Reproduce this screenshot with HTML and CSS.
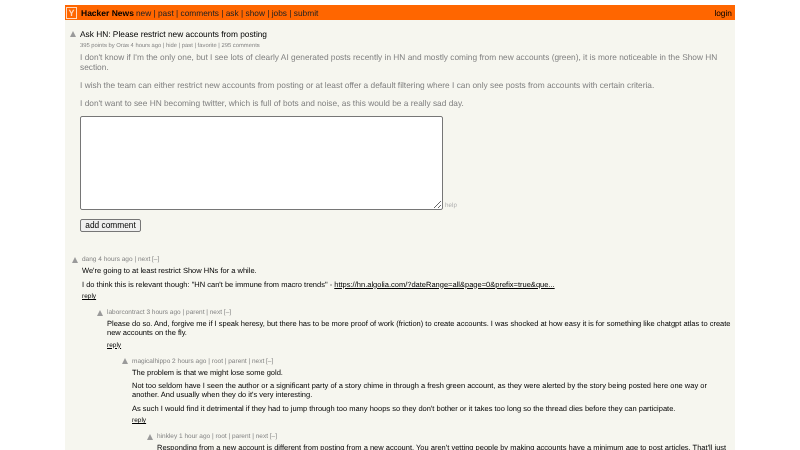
FILE: index.html
```html
<!DOCTYPE html>
<html lang="en">
<head>
  <meta charset="UTF-8" />
  <title>Ask HN: Please restrict new accounts from posting | Hacker News</title>
  <link rel="stylesheet" href="styles.css">
</head>
<body>
  <div class="page">
    <header class="topbar">
      <span class="logo">Y</span>
      <b class="brand">Hacker News</b>
      <nav class="nav">new | past | comments | ask | show | jobs | submit</nav>
      <span class="login">login</span>
    </header>

    <section class="story">
      <div class="title-row">
        <span class="arrow"></span>
        <span class="title">Ask HN: Please restrict new accounts from posting</span>
      </div>
      <div class="subtext">395 points by Oras 4 hours ago | hide | past | favorite | 295 comments</div>
      <div class="toptext">
        <p>I don't know if I'm the only one, but I see lots of clearly AI generated posts recently in HN and mostly coming from new accounts (green), it is more noticeable in the Show HN section.</p>
        <p>I wish the team can either restrict new accounts from posting or at least offer a default filtering where I can only see posts from accounts with certain criteria.</p>
        <p>I don't want to see HN becoming twitter, which is full of bots and noise, as this would be a really sad day.</p>
      </div>
      <div class="reply-form">
        <div class="box-row">
          <textarea class="box"></textarea>
          <span class="help">help</span>
        </div>
        <button class="add">add comment</button>
      </div>
    </section>

    <section class="comments">
      <div class="comment">
        <div class="head"><span class="arrow"></span>dang 4 hours ago | next [–]</div>
        <div class="text">
          <p>We're going to at least restrict Show HNs for a while.</p>
          <p>I do think this is relevant though: "HN can't be immune from macro trends" - <u>https://hn.algolia.com/?dateRange=all&amp;page=0&amp;prefix=true&amp;que...</u></p>
          <p class="reply"><u>reply</u></p>
        </div>
      </div>
      <div class="comment lvl1">
        <div class="head"><span class="arrow"></span>laborcontract 3 hours ago | parent | next [–]</div>
        <div class="text">
          <p>Please do so. And, forgive me if I speak heresy, but there has to be more proof of work (friction) to create accounts. I was shocked at how easy it is for something like chatgpt atlas to create new accounts on the fly.</p>
          <p class="reply"><u>reply</u></p>
        </div>
      </div>
      <div class="comment lvl2">
        <div class="head"><span class="arrow"></span>magicalhippo 2 hours ago | root | parent | next [–]</div>
        <div class="text">
          <p>The problem is that we might lose some gold.</p>
          <p>Not too seldom have I seen the author or a significant party of a story chime in through a fresh green account, as they were alerted by the story being posted here one way or another. And usually when they do it's very interesting.</p>
          <p>As such I would find it detrimental if they had to jump through too many hoops so they don't bother or it takes too long so the thread dies before they can participate.</p>
          <p class="reply"><u>reply</u></p>
        </div>
      </div>
      <div class="comment lvl3">
        <div class="head"><span class="arrow"></span>hinkley 1 hour ago | root | parent | next [–]</div>
        <div class="text">
          <p>Responding from a new account is different from posting from a new account. You aren't vetting people by making accounts have a minimum age to post articles. That'll just encourage people to bank accounts and wait.</p>
        </div>
      </div>
    </section>
  </div>
</body>
</html>
```

FILE: styles.css
```css
html, body {
  height: 100%;
  overflow: hidden;
}

body {
  margin: 0;
  background: white;
  font-family: "Liberation Sans", Arial, sans-serif;
  font-size: 12px;
  text-rendering: geometricPrecision;
}

.page {
  width: 670px;
  height: 445px;
  margin: 5px auto 0;
  background: #f6f6ef;
  overflow: hidden;
  color: #000;
  filter: blur(0.4px);
}

.topbar {
  display: flex;
  align-items: center;
  height: 15px;
  background: #ff6600;
  font-size: 8.33px;
  padding: 0 3px 0 1px;
  color: #222;
}

.logo {
  box-sizing: border-box;
  width: 11px;
  height: 12px;
  border: 1px solid #ffd9bf;
  color: #ffd9bf;
  font-size: 9px;
  font-weight: bold;
  line-height: 11px;
  text-align: center;
  margin-right: 4px;
}

.brand {
  color: #000;
  font-size: 8.5px;
  margin-right: 2px;
}

.nav {
  flex: 1;
}

.login {
  color: #000;
}

.arrow {
  width: 0;
  height: 0;
  border-left: 3px solid transparent;
  border-right: 3px solid transparent;
  border-bottom: 6px solid #9a9a9a;
}

.story {
  padding: 7px 0 0 5px;
}

.title-row {
  display: flex;
  align-items: center;
  gap: 4px;
  height: 13px;
  font-size: 8.33px;
}

.subtext {
  margin: 3px 0 0 10px;
  font-size: 5.83px;
  color: #828282;
}

.toptext {
  margin: 4px 0 0 10px;
  color: #828282;
  font-size: 8.33px;
  line-height: 9.5px;
}

.toptext p {
  margin: 0 0 8.5px;
}

.reply-form {
  margin: -1px 0 0 10px;
}

.box-row {
  display: flex;
  align-items: flex-end;
}

.box {
  width: 363px;
  height: 94px;
  box-sizing: border-box;
  background: white;
  border: 1px solid #767676;
  border-radius: 2px;
  margin: 0;
}

.help {
  font-size: 6.3px;
  color: #afafaf;
  margin: 0 0 1px 2px;
}

.add {
  display: block;
  margin-top: 9px;
  padding: 0;
  width: 61px;
  height: 13px;
  font-family: inherit;
  font-size: 8.33px;
  background: #efefef;
  border: 1px solid #767676;
  border-radius: 2px;
}

.comments {
  padding-top: 24px;
}

.comment {
  padding: 0 2px 3px 7px;
}

.head {
  display: flex;
  align-items: center;
  gap: 4px;
  height: 8px;
  font-size: 6.5px;
  color: #828282;
}

.text {
  margin-left: 10px;
  padding-top: 2.5px;
  font-size: 7.5px;
  line-height: 9px;
}

.text p {
  margin: 0 0 4.5px;
}

.text .reply {
  margin-top: -1px;
  font-size: 6.5px;
}

.lvl1 { padding-left: 32px; }
.lvl2 { padding-left: 57px; }
.lvl3 { padding-left: 82px; }
```
